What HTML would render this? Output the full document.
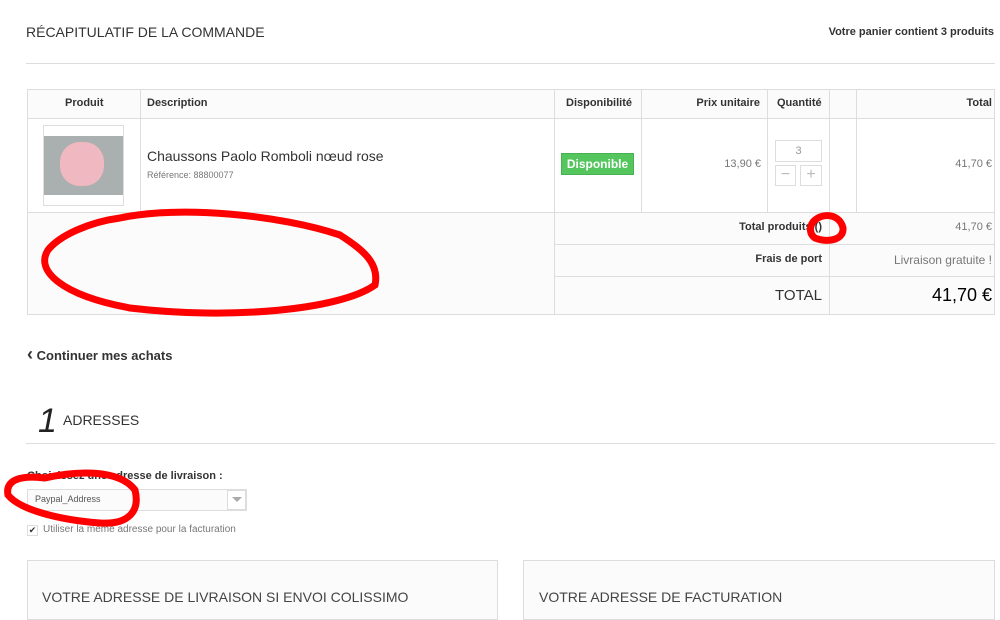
<!DOCTYPE html>
<html><head><meta charset="utf-8"><style>
*{margin:0;padding:0;box-sizing:border-box}
body{width:1000px;height:615px;background:#fff;font-family:"Liberation Sans",Arial,sans-serif;color:#333;position:relative;overflow:hidden}
.a{position:absolute}
.b{position:absolute;border:1px solid #ddd}
.h{font-size:11px;font-weight:bold;color:#333}
.g{font-size:11px;color:#777}
</style></head><body>
<div class="a" style="left:26px;top:24px;font-size:14px;color:#333">RÉCAPITULATIF DE LA COMMANDE</div>
<div class="a" style="right:6px;top:26px;font-size:11px;font-weight:bold;color:#333">Votre panier contient 3 produits</div>
<div class="a" style="left:26px;top:63px;width:969px;height:1px;background:#ddd"></div>

<div class="b" style="left:27px;top:89px;width:968px;height:226px;border-color:#ddd"></div>
<div class="a" style="left:28px;top:90px;width:966px;height:28px;background:#fbfbfb"></div>
<div class="a" style="left:28px;top:213px;width:966px;height:101px;background:#fbfbfb"></div>
<div class="a" style="left:28px;top:118px;width:966px;height:1px;background:#ddd"></div>
<div class="a" style="left:28px;top:212px;width:966px;height:1px;background:#ddd"></div>
<div class="a" style="left:555px;top:244px;width:440px;height:1px;background:#ddd"></div>
<div class="a" style="left:555px;top:276px;width:440px;height:1px;background:#ddd"></div>
<div class="a" style="left:140px;top:90px;width:1px;height:122px;background:#ddd"></div>
<div class="a" style="left:554px;top:90px;width:1px;height:224px;background:#ddd"></div>
<div class="a" style="left:641px;top:90px;width:1px;height:122px;background:#ddd"></div>
<div class="a" style="left:767px;top:90px;width:1px;height:122px;background:#ddd"></div>
<div class="a" style="left:829px;top:90px;width:1px;height:224px;background:#ddd"></div>
<div class="a" style="left:856px;top:90px;width:1px;height:122px;background:#ddd"></div>

<div class="a h" style="left:65px;top:97px">Produit</div>
<div class="a h" style="left:147px;top:97px">Description</div>
<div class="a h" style="left:566px;top:97px">Disponibilité</div>
<div class="a h" style="right:240px;top:97px">Prix unitaire</div>
<div class="a h" style="left:777px;top:97px">Quantité</div>
<div class="a h" style="right:8px;top:97px">Total</div>

<div class="b" style="left:43px;top:125px;width:81px;height:81px;background:#fff"></div>
<div class="a" style="left:44px;top:136px;width:79px;height:59px;background:#aab0b0"></div>
<div class="a" style="left:60px;top:142px;width:44px;height:44px;border-radius:45%;background:#f0b8c0"></div>
<div class="a" style="left:147px;top:148px;font-size:14px;color:#333">Chaussons Paolo Romboli nœud rose</div>
<div class="a" style="left:147px;top:170px;font-size:9px;color:#777">Référence: 88800077</div>
<div class="a" style="left:561px;top:153px;width:73px;height:22px;background:#55c65e;border:1px solid #48b151;color:#fff;font-size:12px;font-weight:bold;text-align:center;line-height:20px">Disponible</div>
<div class="a g" style="right:239px;top:158px">13,90 €</div>
<div class="b" style="left:775px;top:140px;width:47px;height:22px;background:#fff;color:#999;font-size:11px;text-align:center;line-height:20px">3</div>
<div class="b" style="left:775px;top:165px;width:21px;height:21px;color:#bbb;text-align:center;line-height:18px;font-size:16px">−</div>
<div class="b" style="left:800px;top:165px;width:22px;height:21px;color:#bbb;text-align:center;line-height:18px;font-size:16px">+</div>
<div class="a g" style="right:8px;top:158px">41,70 €</div>

<div class="a h" style="right:178px;top:221px">Total produits ()</div>
<div class="a g" style="right:8px;top:221px">41,70 €</div>
<div class="a h" style="right:178px;top:253px">Frais de port</div>
<div class="a" style="right:8px;top:253px;font-size:12px;color:#777">Livraison gratuite !</div>
<div class="a" style="right:178px;top:287px;font-size:15px;color:#333">TOTAL</div>
<div class="a" style="right:8px;top:285px;font-size:18px;color:#000">41,70 €</div>

<div class="a" style="left:27px;top:348px;font-size:13px;font-weight:bold;color:#333"><span style="font-size:18px;line-height:13px">&#8249;</span>&nbsp;Continuer mes achats</div>

<div class="a" style="left:38px;top:402px;font-size:34px;font-style:italic;color:#222;line-height:38px">1</div>
<div class="a" style="left:63px;top:412px;font-size:14px;color:#333">ADRESSES</div>
<div class="a" style="left:26px;top:443px;width:969px;height:1px;background:#ddd"></div>
<div class="a h" style="left:27px;top:470px;font-size:11px">Choisissez une adresse de livraison :</div>
<div class="b" style="left:27px;top:489px;width:220px;height:22px;background:#fbfbfb"></div>
<div class="b" style="left:227px;top:490px;width:19px;height:20px;background:#fff"></div>
<div class="a" style="left:232px;top:497px;width:0;height:0;border-left:5px solid transparent;border-right:5px solid transparent;border-top:5px solid #aaa"></div>
<div class="a" style="left:35px;top:494px;font-size:9px;color:#555">Paypal_Address</div>
<div class="b" style="left:27px;top:525px;width:11px;height:11px;font-size:9px;line-height:9px;text-align:center">✔</div>
<div class="a" style="left:43px;top:524px;font-size:10px;color:#777">Utiliser la même adresse pour la facturation</div>

<div class="b" style="left:27px;top:560px;width:471px;height:60px;background:#fbfbfb"></div>
<div class="a" style="left:42px;top:589px;font-size:14px;color:#444">VOTRE ADRESSE DE LIVRAISON SI ENVOI COLISSIMO</div>
<div class="b" style="left:523px;top:560px;width:472px;height:60px;background:#fbfbfb"></div>
<div class="a" style="left:539px;top:589px;font-size:14px;color:#444">VOTRE ADRESSE DE FACTURATION</div>

<svg class="a" style="left:0;top:0" width="1000" height="615">
<g fill="none" stroke="#f00" stroke-width="7" stroke-linecap="round">
<path d="M120 218 C 180 205 280 215 340 235 C 360 248 380 262 375 285 C 340 310 230 320 130 308 C 60 295 35 270 48 250 C 60 235 90 222 120 218"/>
<path d="M815 220 C 825 212 840 215 843 228 C 844 240 828 243 815 238 C 808 233 810 224 815 220"/>
<path d="M45 478 C 80 470 120 470 135 490 C 140 510 130 525 100 523 C 60 520 20 510 8 495 C 5 480 20 475 45 478"/>
</g></svg>
</body></html>
